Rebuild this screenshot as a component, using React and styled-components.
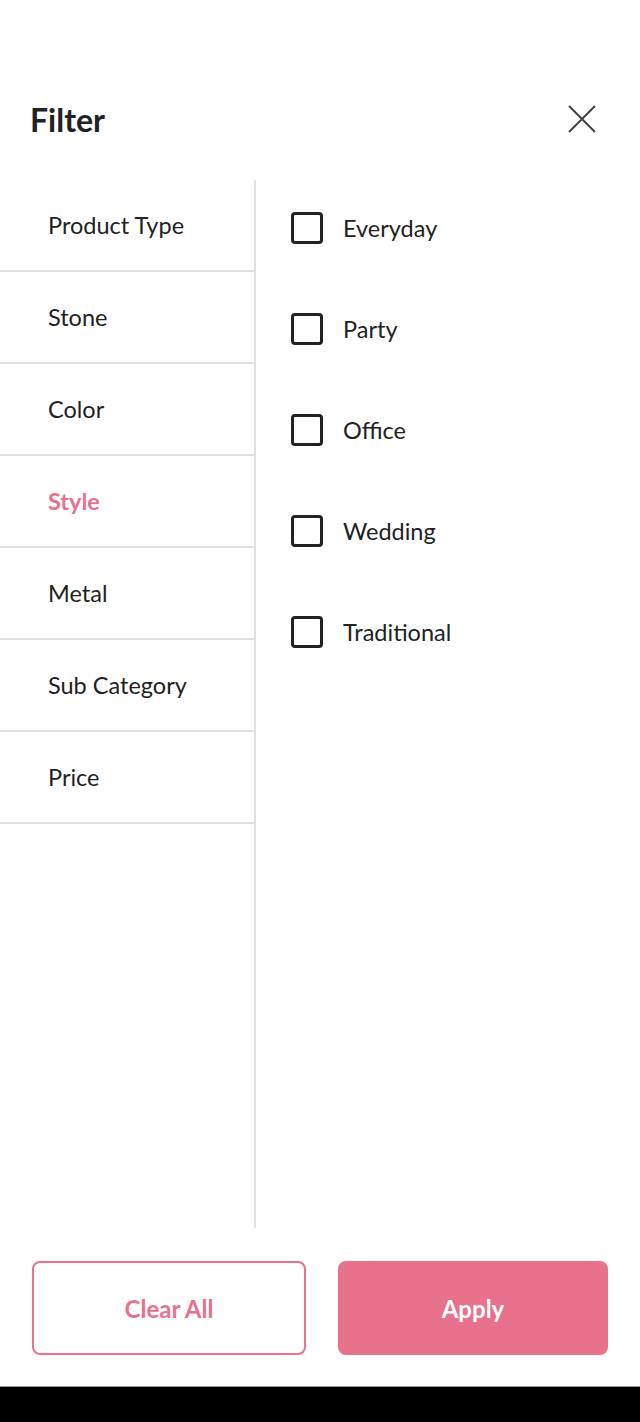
import React, { useState } from 'react';
import styled, { createGlobalStyle } from 'styled-components';

const GlobalStyle = createGlobalStyle`
  html, body {
    margin: 0;
    padding: 0;
    background: #fff;
    font-family: Lato, "Open Sans", sans-serif;
  }
`;

const PINK = '#e8718b';

const Page = styled.div`
  width: 640px;
  height: 1422px;
  display: flex;
  flex-direction: column;
  background: #fff;
`;

const Header = styled.div`
  height: 180px;
  padding: 58px 30px 0 30px;
  display: flex;
  align-items: center;
  justify-content: space-between;
  box-sizing: border-box;
`;

const Title = styled.h1`
  margin: 0;
  font-size: 32px;
  font-weight: 700;
  color: #222;
`;

const CloseButton = styled.button`
  border: none;
  background: none;
  padding: 0;
  width: 30px;
  height: 30px;
  margin-right: 13px;
  cursor: pointer;
  display: flex;
  align-items: center;
  justify-content: center;
`;

const Body = styled.div`
  display: flex;
  height: 1048px;
`;

const Sidebar = styled.div`
  width: 254px;
  border-right: 2px solid #e0e0e0;
  display: flex;
  flex-direction: column;
`;

const Tab = styled.div`
  height: 90px;
  border-bottom: 2px solid #e0e0e0;
  padding-left: 48px;
  display: flex;
  align-items: center;
  font-size: 23.5px;
  color: ${p => (p.active ? PINK : '#222')};
  font-weight: ${p => (p.active ? 700 : 400)};
  cursor: pointer;
`;

const Options = styled.div`
  flex: 1;
  padding: 32px 0 0 35px;
  display: flex;
  flex-direction: column;
  gap: 69px;
`;

const Option = styled.label`
  display: flex;
  align-items: center;
  gap: 20px;
  height: 32px;
  font-size: 23.5px;
  color: #222;
  cursor: pointer;
`;

const Box = styled.span`
  width: 26px;
  height: 26px;
  border: 3px solid #222;
  border-radius: 4px;
  background: ${p => (p.checked ? PINK : '#fff')};
`;

const Footer = styled.div`
  display: flex;
  gap: 32px;
  padding: 33px 32px 0 32px;
  height: 158px;
  box-sizing: border-box;
`;

const Button = styled.button`
  width: ${p => (p.primary ? '270px' : '274px')};
  height: 94px;
  border-radius: 8px;
  border: 2px solid ${PINK};
  background: ${p => (p.primary ? PINK : '#fff')};
  color: ${p => (p.primary ? '#fff' : PINK)};
  font-family: Lato, sans-serif;
  font-size: 24px;
  font-weight: 700;
  cursor: pointer;
`;

const NavBar = styled.div`
  flex: 1;
  background: #000;
  border-top: 1px solid #999;
`;

const tabs = ['Product Type', 'Stone', 'Color', 'Style', 'Metal', 'Sub Category', 'Price'];
const styles = ['Everyday', 'Party', 'Office', 'Wedding', 'Traditional'];

export default function App() {
  const [active, setActive] = useState('Style');
  const [checked, setChecked] = useState({});

  return (
    <Page>
      <GlobalStyle />
      <Header>
        <Title>Filter</Title>
        <CloseButton aria-label="close">
          <svg width="30" height="30" viewBox="0 0 30 30">
            <path d="M2 2 L28 28 M28 2 L2 28" stroke="#444" strokeWidth="2" fill="none" />
          </svg>
        </CloseButton>
      </Header>
      <Body>
        <Sidebar>
          {tabs.map(t => (
            <Tab key={t} active={t === active} onClick={() => setActive(t)}>
              {t}
            </Tab>
          ))}
        </Sidebar>
        <Options>
          {styles.map(s => (
            <Option key={s} onClick={() => setChecked({ ...checked, [s]: !checked[s] })}>
              <Box checked={checked[s]} />
              {s}
            </Option>
          ))}
        </Options>
      </Body>
      <Footer>
        <Button>Clear All</Button>
        <Button primary>Apply</Button>
      </Footer>
      <NavBar />
    </Page>
  );
}
